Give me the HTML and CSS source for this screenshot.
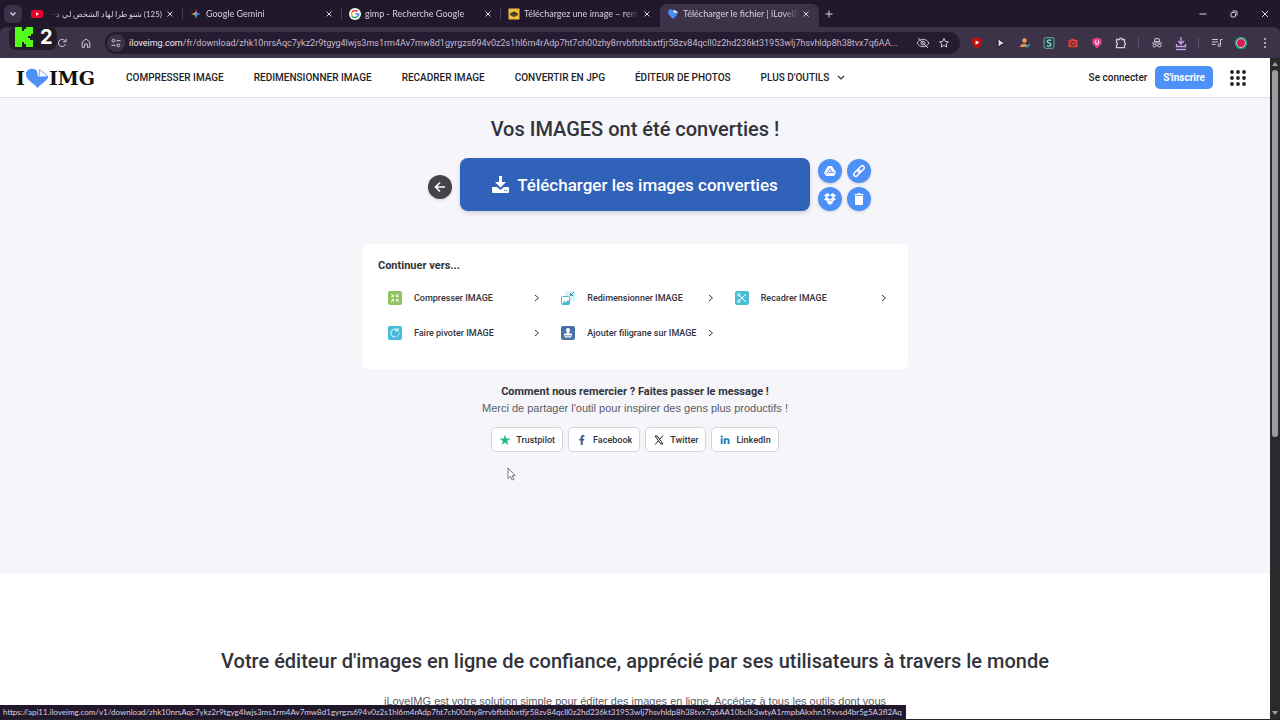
FILE: index.html
```html
<!DOCTYPE html>
<html lang="fr">
<head>
    <meta charset="utf-8">
    <title>Télécharger le fichier | iLoveIMG</title>
    <link rel="stylesheet" href="styles.css">
</head>
<body>
    <header class="browser">
        <div class="tabs">
            <button class="tab-search" aria-label="Rechercher des onglets">
                <svg width="8" height="8" viewBox="0 0 8 8"><path d="M1.5 2.5L4 5l2.500-2.500" fill="none" stroke="#ddd6e6" stroke-width="1.300"/></svg>
            </button>
            <div class="tab">
                <svg width="12" height="12" viewBox="0 0 12 12"><rect y="2" width="12" height="8" rx="2" fill="#e8002d"/><path d="M5 4.200v3.600L8 6z" fill="#fff"/></svg>
                <span class="tab-title arabic" dir="rtl">(125) شنو طرا لهاد الشخص لي د-</span>
                <button class="close" aria-label="Fermer"><svg width="8" height="8" viewBox="0 0 8 8"><path d="M1.500 1.500l5 5m0-5l-5 5"/></svg></button>
            </div>
            <div class="tab">
                <svg width="12" height="12" viewBox="0 0 12 12"><path d="M6 1Q6.500 4 8 6H4Q5.500 4 6 1z" fill="#ee5145"/><path d="M1 6Q4 5.500 6 4v4Q4 6.500 1 6z" fill="#f3c13b"/><path d="M6 11Q5.500 8 4 6h4Q6.500 8 6 11z" fill="#37b27c"/><path d="M11 6Q8 5.500 6 4v4Q8 6.500 11 6z" fill="#4b8df5"/></svg>
                <span class="tab-title">Google Gemini</span>
                <button class="close" aria-label="Fermer"><svg width="8" height="8" viewBox="0 0 8 8"><path d="M1.500 1.500l5 5m0-5l-5 5"/></svg></button>
            </div>
            <div class="tab">
                <svg width="12" height="12" viewBox="0 0 12 12"><circle cx="6" cy="6" r="6" fill="#fff"/><g fill="none" stroke-width="1.600"><path d="M8.600 3.600A3.600 3.600 0 0 0 2.900 4.300" stroke="#ea4335"/><path d="M2.900 4.300a3.600 3.600 0 0 0 0 3.500" stroke="#fbbc05"/><path d="M2.900 7.800a3.600 3.600 0 0 0 5.500.900" stroke="#34a853"/><path d="M8.400 8.700A3.600 3.600 0 0 0 9.600 6H6.200" stroke="#4285f4"/></g></svg>
                <span class="tab-title">gimp - Recherche Google</span>
                <button class="close" aria-label="Fermer"><svg width="8" height="8" viewBox="0 0 8 8"><path d="M1.500 1.500l5 5m0-5l-5 5"/></svg></button>
            </div>
            <div class="tab">
                <svg width="12" height="12" viewBox="0 0 12 12"><rect x=".5" y=".5" width="11" height="11" fill="#f3bd3f"/><path d="M2 5.500l4-2 4 2v1.500L6 9 2 7z" fill="#3a322a"/><path d="M3 6l3 1.500L9 6" fill="none" stroke="#8a6c35" stroke-width=".7"/></svg>
                <span class="tab-title">Téléchargez une image – remov</span>
                <button class="close" aria-label="Fermer"><svg width="8" height="8" viewBox="0 0 8 8"><path d="M1.500 1.500l5 5m0-5l-5 5"/></svg></button>
            </div>
            <div class="tab active">
                <svg width="12" height="12" viewBox="0 0 12 12"><path d="M6 2.300C4.700.400 1 .800 1 3.900 1 6.700 4 9 6 11c2-2 5-4.300 5-7.100L8.500 5.200 6 4z" fill="#4c8cf5"/><path d="M6.500 1.500L11 4 8 5.200 6.300 4z" fill="#e8f0fe"/></svg>
                <span class="tab-title">Télécharger le fichier | iLoveIMG</span>
                <button class="close" aria-label="Fermer"><svg width="8" height="8" viewBox="0 0 8 8"><path d="M1.500 1.500l5 5m0-5l-5 5"/></svg></button>
            </div>
            <button class="new-tab" aria-label="Nouvel onglet"><svg width="8" height="8" viewBox="0 0 8 8"><path d="M4 .5v7M.5 4h7"/></svg></button>
            <div class="window-controls">
                <button aria-label="Réduire"><svg width="8" height="8" viewBox="0 0 8 8"><path d="M.5 4h7"/></svg></button>
                <button aria-label="Restaurer"><svg width="8" height="8" viewBox="0 0 8 8"><rect x="1" y="2.500" width="4.500" height="4.500" rx="1"/><path d="M2.500 1h3.500a1 1 0 0 1 1 1v3.500"/></svg></button>
                <button aria-label="Fermer la fenêtre"><svg width="8" height="8" viewBox="0 0 8 8"><path d="M1 1l6 6m0-6L1 7"/></svg></button>
            </div>
        </div>

        <div class="toolbar">
            <button class="tool" aria-label="Retour"><svg width="12" height="12" viewBox="0 0 12 12"><path d="M10 6H2m4-4L2 6l4 4"/></svg></button>
            <button class="tool" aria-label="Avancer"><svg width="12" height="12" viewBox="0 0 12 12"><path d="M2 6h8M6 2l4 4-4 4"/></svg></button>
            <button class="tool" aria-label="Actualiser"><svg width="12" height="12" viewBox="0 0 12 12"><path d="M9.500 7A3.600 3.600 0 1 1 8.600 3.400L10 4.700M10 2v2.800H7.200"/></svg></button>
            <button class="tool" aria-label="Accueil"><svg width="12" height="12" viewBox="0 0 12 12"><path d="M2.200 5L6 2l3.800 3v5.300H7.400V7H4.600v3.300H2.200z"/></svg></button>
            <div class="address">
                <button class="site-info" aria-label="Informations"><svg width="10" height="10" viewBox="0 0 10 10"><circle cx="2.500" cy="2.700" r="1.400"/><path d="M5.500 2.700H9.500M.5 7.300h4"/><circle cx="7.300" cy="7.300" r="1.400"/></svg></button>
                <span class="url"><b>iloveimg.com</b>/fr/download/zhk10nrsAqc7ykz2r9tgyg4lwjs3ms1rm4Av7mw8d1gyrgzs694v0z2s1hl6m4rAdp7ht7ch00zhy8rrvbfbtbbxtfjr58zv84qcll0z2hd236kt31953wlj7hsvhldp8h38tvx7q6AA...</span>
                <button class="address-icon" aria-label="Cookies tiers"><svg width="14" height="12" viewBox="0 0 14 12"><path d="M1 6c3-5 9-5 12 0-3 5-9 5-12 0z"/><circle cx="7" cy="6" r="2"/><path d="M2 1l10 10"/></svg></button>
                <button class="address-icon" aria-label="Favori"><svg width="12" height="12" viewBox="0 0 12 12"><path d="M6 1.500l1.300 3 3.200.300-2.400 2.100.700 3.200L6 8.400l-2.800 1.700.7-3.200-2.400-2.100 3.200-.3z"/></svg></button>
            </div>
            <button class="tool" aria-label="Bloqueur"><svg width="12" height="12" viewBox="0 0 12 12"><path d="M6 .5l5 1.500c0 4-1 7.500-5 9.500C2 9.500 1 6 1 2z" fill="#c60c12" stroke="none"/><path d="M4.600 3.500v4.200L8.200 5.600z" fill="#fff" stroke="none"/></svg></button>
            <button class="tool" aria-label="Curseur"><svg width="12" height="12" viewBox="0 0 12 12"><path d="M3 1.500l7 5.500-3.500.5L3 10.500z" fill="#d9dcf2" stroke="#171322"/></svg></button>
            <button class="tool" aria-label="Compte"><svg width="12" height="12" viewBox="0 0 12 12"><circle cx="5.500" cy="3.500" r="2.200" fill="#f3a05a" stroke="none"/><path d="M1 10c0-4.500 8-4.500 8 0z" fill="#e8904a" stroke="none"/><path d="M7 8.500L8.500 10 11 7" stroke="#25a795" stroke-width="1.500"/></svg></button>
            <button class="tool" aria-label="Extension S"><svg width="12" height="12" viewBox="0 0 12 12"><rect x="1" y=".7" width="10" height="10.600" rx="1.500" fill="#28424a" stroke="#73a7a6"/><path d="M8 3.600C7 2.600 4.200 2.800 4.200 4.400c0 1.900 3.800 1.200 3.800 3.200 0 1.600-3 1.900-4 .7" stroke="#8ed8c8" stroke-width="1.300"/></svg></button>
            <button class="tool" aria-label="Capture"><svg width="12" height="12" viewBox="0 0 12 12"><path d="M1.500 3h2l1-1.200h3L8.500 3h2v7.200h-9z" fill="#dd3d3d" stroke="none"/><circle cx="6" cy="6.500" r="2" stroke="#4b2631"/></svg></button>
            <button class="tool" aria-label="Protection"><svg width="12" height="12" viewBox="0 0 12 12"><path d="M6 .5l4.500 1.800v4.500L6 11.500 1.500 6.800V2.300z" fill="#e0438b" stroke="none"/><path d="M4.700 3.500v2.700c0 1.700 2.600 1.700 2.600 0V3.500" stroke="#fff"/></svg></button>
            <button class="tool" aria-label="Extensions"><svg width="12" height="12" viewBox="0 0 12 12"><path d="M1.500 2.500h3a1.300 1.300 0 0 1 2.600 0h2.400v3a1.300 1.300 0 0 1 0 2.500v2.700h-8V8a1.400 1.400 0 0 0 0-2.600z" stroke-width="1.300"/></svg></button>
            <span class="divider"></span>
            <button class="tool" aria-label="Navigation privée"><svg width="12" height="12" viewBox="0 0 12 12"><path d="M1 6h10M3.200 4.500L4 1.700h4l.8 2.800z"/><circle cx="3.500" cy="8.600" r="1.500"/><circle cx="8.500" cy="8.600" r="1.500"/><path d="M5 8.300h2"/></svg></button>
            <button class="tool" aria-label="Téléchargements"><svg width="12" height="16" viewBox="0 0 12 16"><g stroke="#c9a5ee" stroke-width="1.300"><path d="M6 2v7M3 6l3 3 3-3M1.500 9v2.500h9V9" /><path d="M1 14.500h10"/></g></svg></button>
            <span class="divider"></span>
            <button class="tool" aria-label="Multimédia"><svg width="12" height="12" viewBox="0 0 12 12"><path d="M1 2.500h6M1 5h6M1 7.500h3.500M11.500 2.500h-2V8"/><circle cx="8.200" cy="8.300" r="1.300"/></svg></button>
            <button class="tool" aria-label="Profil"><svg width="14" height="14" viewBox="0 0 14 14"><circle cx="7" cy="7" r="6.300" fill="#109a73" stroke="none"/><circle cx="7" cy="7" r="4.500" fill="#d81b55" stroke="#e8d7d8" stroke-width=".8"/></svg></button>
            <button class="tool" aria-label="Menu"><svg width="12" height="12" viewBox="0 0 12 12"><g fill="#cfc6d8" stroke="none"><circle cx="6" cy="2" r="1"/><circle cx="6" cy="6" r="1"/><circle cx="6" cy="10" r="1"/></g></svg></button>
        </div>
    </header>

    <div class="overlay-badge">
        <svg width="18" height="20" viewBox="0 0 18 20"><path d="M0 0h7v4h2V2h2V0h7v7h-2v2h-3v2h2v2h3v7h-7v-3H9v-2H7v5H0z" fill="#53fc18"/></svg>
        <span>2</span>
    </div>

    <div class="viewport">
        <div class="page">
            <nav class="navbar">
                <a class="logo" href="#" aria-label="iLoveIMG">
                    <span>I</span>
                    <svg width="24" height="20" viewBox="0 0 24 20"><path d="M12 3C9-.7 1 .2 1 6.500 1 12 8 14.500 12.500 20 17 15 21.500 13 23.500 9H13z" fill="#4d90f7"/><path d="M14.500 1.500l8.500 7-9 .5z" fill="#fff" stroke="#4d90f7" stroke-width=".8"/></svg>
                    <span>IMG</span>
                </a>
                <a href="#">COMPRESSER IMAGE</a>
                <a href="#">REDIMENSIONNER IMAGE</a>
                <a href="#">RECADRER IMAGE</a>
                <a href="#">CONVERTIR EN JPG</a>
                <a href="#">ÉDITEUR DE PHOTOS</a>
                <a href="#">PLUS D'OUTILS <svg class="caret" width="8" height="6" viewBox="0 0 8 6"><path d="M1 1l3 3 3-3" fill="none" stroke="#333" stroke-width="1.200"/></svg></a>
                <div class="account">
                    <a href="#">Se connecter</a>
                    <a class="signup" href="#">S'inscrire</a>
                    <button class="apps" aria-label="Applications">
                        <svg width="16" height="16" viewBox="0 0 16 16" fill="#242428"><circle cx="2" cy="2" r="1.900"/><circle cx="8" cy="2" r="1.900"/><circle cx="14" cy="2" r="1.900"/><circle cx="2" cy="8" r="1.900"/><circle cx="8" cy="8" r="1.900"/><circle cx="14" cy="8" r="1.900"/><circle cx="2" cy="14" r="1.900"/><circle cx="8" cy="14" r="1.900"/><circle cx="14" cy="14" r="1.900"/></svg>
                    </button>
                </div>
            </nav>

            <main class="result">
                <h1>Vos IMAGES ont été converties !</h1>
                <div class="download">
                    <button class="round back" aria-label="Retour"><svg width="12" height="12" viewBox="0 0 12 12"><path d="M11 6H1.500M6 1.500L1.500 6 6 10.500" fill="none" stroke="#fff" stroke-width="1.600"/></svg></button>
                    <button class="download-button">
                        <svg width="17" height="17" viewBox="0 0 17 17" fill="#fff"><path d="M7 0h3v6h4L8.500 11.500 3 6h4z"/><path d="M1 11h4l3.500 3 3.500-3h4a1 1 0 0 1 1 1v4a1 1 0 0 1-1 1H1a1 1 0 0 1-1-1v-4a1 1 0 0 1 1-1z"/><path d="M12 14.500h1m1 0h1" stroke="#3162b9"/></svg>
                        Télécharger les images converties
                    </button>
                    <div class="download-options">
                        <button class="round" aria-label="Google Drive"><svg width="12" height="12" viewBox="0 0 12 12"><path d="M4 1h4l4 6.500-2 3.500H2L0 7.500z" fill="#fff"/><path d="M6 3.500l-3.500 6M4.500 7.500h6M6 4l2 3.500" fill="none" stroke="#4d90f7" stroke-width=".9"/></svg></button>
                        <button class="round" aria-label="Copier le lien"><svg width="14" height="14" viewBox="0 0 14 14" fill="none" stroke="#fff" stroke-width="1.500"><rect x="-3.800" y="-1.900" width="7.600" height="3.800" rx="1.900" transform="translate(9 5) rotate(-45)"/><rect x="-3.800" y="-1.900" width="7.600" height="3.800" rx="1.900" transform="translate(5 9) rotate(-45)"/></svg></button>
                        <button class="round" aria-label="Dropbox"><svg width="12" height="12" viewBox="0 0 12 12" fill="#fff"><path d="M3.300 0L6 1.900 8.700 0 12 2.400 9.800 4.300 12 6.200 8.700 8.400 6 6.400 3.300 8.400 0 6.200l2.200-1.900L0 2.400zM6 2.200L3 4.300l3 2 3-2zM3 9l3-1.800L9 9v.7L6 12 3 9.700z" fill-rule="evenodd"/></svg></button>
                        <button class="round" aria-label="Supprimer"><svg width="12" height="14" viewBox="0 0 12 14" fill="#fff"><path d="M1.500 2h3l.5-1h2l.5 1h3v1.300h-9zM2 4h8v8a1 1 0 0 1-1 1H3a1 1 0 0 1-1-1z"/></svg></button>
                    </div>
                </div>

                <section class="continue">
                    <h2>Continuer vers...</h2>
                    <div class="tools">
                        <a href="#">
                            <svg width="14" height="14" viewBox="0 0 14 14"><rect width="14" height="14" rx="2" fill="#8fc45f"/><path d="M3 3l2.500 2.500M3.300 5.500h2.200V3.300M11 3L8.500 5.500M10.700 5.500H8.500V3.300M3 11l2.500-2.500M3.300 8.500h2.200v2.200M11 11L8.500 8.500M10.700 8.500H8.500v2.200" fill="none" stroke="#fff" stroke-width=".9"/></svg>
                            <span>Compresser IMAGE</span>
                            <svg class="arrow" width="6" height="8" viewBox="0 0 6 8"><path d="M1 1l3.500 3L1 7"/></svg>
                        </a>
                        <a href="#">
                            <svg width="14" height="14" viewBox="0 0 14 14"><rect x="4" y="0" width="10" height="10" rx="1" fill="#daf4f7"/><rect x=".5" y="5.500" width="8" height="8" rx="1" fill="#fff" stroke="#45b9cf"/><path d="M1 13l2.500-3L5 11.500 7 9l1.500 2v2.500H1z" fill="#45b9cf"/><path d="M13 1L9.500 4.500M9.500 2v2.500H12" fill="none" stroke="#3199b0"/></svg>
                            <span>Redimensionner IMAGE</span>
                            <svg class="arrow" width="6" height="8" viewBox="0 0 6 8"><path d="M1 1l3.500 3L1 7"/></svg>
                        </a>
                        <a href="#">
                            <svg width="14" height="14" viewBox="0 0 14 14"><rect width="14" height="14" rx="2" fill="#4abcd6"/><g fill="none" stroke="#fff"><path d="M4.500 4.500L11 11M4.500 9.500L11 3"/><circle cx="3.800" cy="3.800" r="1.200"/><circle cx="3.800" cy="10.200" r="1.200"/></g></svg>
                            <span>Recadrer IMAGE</span>
                            <svg class="arrow" width="6" height="8" viewBox="0 0 6 8"><path d="M1 1l3.500 3L1 7"/></svg>
                        </a>
                        <a href="#">
                            <svg width="14" height="14" viewBox="0 0 14 14"><rect width="14" height="14" rx="2" fill="#45bcdc"/><path d="M9.500 4A4 4 0 1 0 7 11M10 2v2.800H7.200" fill="none" stroke="#fff"/><path d="M8.500 10.800a4 4 0 0 0 2.500-4.500" fill="none" stroke="#fff" stroke-dasharray="1.200 1"/></svg>
                            <span>Faire pivoter IMAGE</span>
                            <svg class="arrow" width="6" height="8" viewBox="0 0 6 8"><path d="M1 1l3.500 3L1 7"/></svg>
                        </a>
                        <a href="#">
                            <svg width="14" height="14" viewBox="0 0 14 14"><rect width="14" height="14" rx="2" fill="#4a71a5"/><path d="M7 2a2 2 0 0 1 1.700 3L8 7.500h3v2H3v-2h3L5.300 5A2 2 0 0 1 7 2zM3.500 10.300h7v1.200h-7z" fill="#fff"/></svg>
                            <span>Ajouter filigrane sur IMAGE</span>
                            <svg class="arrow" width="6" height="8" viewBox="0 0 6 8"><path d="M1 1l3.500 3L1 7"/></svg>
                        </a>
                    </div>
                </section>

                <section class="thanks">
                    <h2>Comment nous remercier ? Faites passer le message !</h2>
                    <p>Merci de partager l'outil pour inspirer des gens plus productifs !</p>
                    <div class="share">
                        <a href="#"><svg width="12" height="12" viewBox="0 0 12 12"><path d="M6 .8l1.300 3.800h4.200L8.200 7l1.200 4L6 8.600 2.600 11l1.200-4L.5 4.600h4.200z" fill="#22bd80"/></svg>Trustpilot</a>
                        <a href="#"><svg width="12" height="12" viewBox="0 0 12 12"><path d="M4.800 11V6.500H3.300V4.700h1.500V3.400C4.800 1.700 5.800 1 7.200 1h1.200v1.700h-.9c-.6 0-.8.300-.8.900v1.100h1.700l-.3 1.800H6.700V11z" fill="#3b5998"/></svg>Facebook</a>
                        <a href="#"><svg width="12" height="12" viewBox="0 0 12 12"><path d="M2 2h2.200L10 10H7.800z" fill="none" stroke="#222"/><path d="M10 1.500L6.700 5.300M5.300 6.800L2 10.500" stroke="#222"/></svg>Twitter</a>
                        <a href="#"><svg width="12" height="12" viewBox="0 0 12 12"><g fill="#1479b8"><circle cx="2.700" cy="2.500" r="1.100"/><path d="M1.800 4.300h1.800V10H1.800zM4.800 4.300h1.700v.8c1-1.500 4-1.300 4 1.500V10H8.700V7c0-1.700-2.100-1.700-2.100 0v3H4.800z"/></g></svg>LinkedIn</a>
                    </div>
                </section>
            </main>

            <section class="about">
                <h2>Votre éditeur d'images en ligne de confiance, apprécié par ses utilisateurs à travers le monde</h2>
                <p>iLoveIMG est votre solution simple pour éditer des images en ligne. Accédez à tous les outils dont vous</p>
            </section>
        </div>
        <div class="scrollbar">
            <svg width="8" height="6" viewBox="0 0 8 6"><path d="M4 1l3 4H1z"/></svg>
            <div class="thumb"></div>
            <svg width="8" height="6" viewBox="0 0 8 6"><path d="M4 5L1 1h6z"/></svg>
        </div>
    </div>

    <div class="status">https://api11.iloveimg.com/v1/download/zhk10nrsAqc7ykz2r9tgyg4lwjs3ms1rm4Av7mw8d1gyrgzs694v0z2s1hl6m4rAdp7ht7ch00zhy8rrvbfbtbbxtfjr58zv84qcll0z2hd236kt31953wlj7hsvhldp8h38tvx7q6AA10bclk3wtyA1rmpbAkxhn19xvsd4br5g5A3fl2Aq</div>
    <svg class="cursor" width="9" height="14" viewBox="0 0 9 14"><path d="M1 1v10.500l2.500-2.200 1.700 3.700 1.600-.700-1.600-3.600H8.300z" fill="#fff" stroke="#555" stroke-width=".8"/></svg>
</body>
</html>
```
FILE: styles.css
```css
* {
    box-sizing: border-box;
}

body {
    margin: 0;
    height: 100vh;
    display: flex;
    flex-direction: column;
    overflow: hidden;
    position: relative;
    background: #262429;
    color: #33333b;
    font-family: Roboto, "Liberation Sans", sans-serif;
}

button {
    border: 0;
    padding: 0;
    background: none;
    font-family: inherit;
    display: flex;
    align-items: center;
    justify-content: center;
    cursor: pointer;
}

a {
    color: inherit;
    text-decoration: none;
}

h1, h2, p {
    margin: 0;
}

svg {
    flex: none;
}

/* Browser */
.browser {
    flex: none;
    background: #21182c;
    color: #d8d0e0;
}

.tabs {
    height: 27px;
    display: flex;
    align-items: center;
    padding-left: 4px;
}

.tabs button svg {
    fill: none;
    stroke: #d8d0e0;
}

.tab-search {
    width: 18px;
    height: 18px;
    margin-right: 2px;
    border-radius: 6px;
    background: #3c3148;
}

.tab {
    width: 159px;
    height: 23px;
    display: flex;
    align-items: center;
    gap: 4px;
    padding: 0 9px 0 7px;
    background: linear-gradient(#4a3f58, #4a3f58) right center / 1px 11px no-repeat;
}

.tab:nth-last-child(4) {
    background: none;
}

.tab.active {
    align-self: flex-end;
    padding-bottom: 4px;
    background: #3d3349;
    border-radius: 7px 7px 0 0;
}

.tab-title {
    flex: 1;
    overflow: hidden;
    white-space: nowrap;
    font-family: Lato, sans-serif;
    font-size: 9px;
    -webkit-mask-image: linear-gradient(90deg, #000 88%, transparent);
    mask-image: linear-gradient(90deg, #000 88%, transparent);
}

.tab-title.arabic {
    font-size: 8px;
    -webkit-mask-image: linear-gradient(270deg, #000 88%, transparent);
    mask-image: linear-gradient(270deg, #000 88%, transparent);
}

.new-tab {
    width: 20px;
    height: 20px;
}

.window-controls {
    margin-left: auto;
    display: flex;
}

.window-controls button {
    width: 31px;
    height: 27px;
}

.toolbar {
    height: 31px;
    display: flex;
    align-items: center;
    padding: 0 3px 0 2px;
    background: #3d3349;
    border-radius: 6px 6px 0 0;
}

.toolbar svg {
    fill: none;
    stroke: #cfc6d8;
}

.tool {
    width: 24px;
    height: 24px;
}

.divider {
    width: 1px;
    height: 10px;
    margin: 0 6px 0 5px;
    background: #5d506b;
}

.address {
    flex: 1;
    min-width: 0;
    height: 22px;
    display: flex;
    align-items: center;
    margin: 0 5px 0 7px;
    padding: 0 6px 0 2px;
    border-radius: 11px;
    background: #261c31;
}

.site-info {
    width: 18px;
    height: 18px;
    margin-right: 4px;
    border-radius: 50%;
    background: #3d3349;
}

.url {
    flex: 1;
    overflow: hidden;
    white-space: nowrap;
    font-size: 9px;
    color: #c3bacd;
}

.url b {
    font-weight: 400;
    color: #eee8f4;
}

.address-icon {
    width: 21px;
    height: 20px;
}

.overlay-badge {
    position: absolute;
    top: 26px;
    left: 9px;
    display: flex;
    align-items: center;
    gap: 7px;
    height: 24px;
    padding: 0 4px 2px 6px;
    border-radius: 8px;
    background: #221c28;
    color: #fff;
    font: 700 20px/22px Inter, sans-serif;
}

/* Page */
.viewport {
    flex: 1;
    min-height: 0;
    display: flex;
    margin-bottom: 1px;
}

.page {
    flex: 1;
    min-width: 0;
    overflow: hidden;
    background: #fff;
}

.navbar {
    height: 40px;
    display: flex;
    align-items: center;
    gap: 30px;
    padding: 0 24px 0 16px;
    border-bottom: 1px solid #dedee5;
    color: #222226;
    font-size: 10px;
    font-weight: 500;
    white-space: nowrap;
}

.logo {
    display: flex;
    align-items: center;
    margin-right: 1px;
    color: #111;
    font-family: "DejaVu Serif", serif;
    font-size: 19px;
    font-weight: 700;
}

.caret {
    margin-left: 5px;
}

.account {
    margin-left: auto;
    display: flex;
    align-items: center;
    gap: 8px;
}

.signup {
    padding: 0 8px;
    border-radius: 5px;
    background: #4d90f7;
    color: #fff;
    font-weight: 700;
    line-height: 23px;
}

.apps {
    margin-left: 9px;
}

.result {
    display: flex;
    flex-direction: column;
    align-items: center;
    min-height: 476px;
    padding-top: 18px;
    background: #f5f5fa;
}

.result h1,
.about h2 {
    font-size: 20px;
    font-weight: 500;
    line-height: 26px;
}

.download {
    display: flex;
    align-items: center;
    gap: 8px;
    margin: 16px 0 0 29px;
}

.download-button {
    height: 53px;
    gap: 8px;
    padding: 0 32px;
    border-radius: 8px;
    background: #3162b9;
    color: #fff;
    font-size: 17px;
    font-weight: 500;
    box-shadow: 0 2px 4px rgba(0, 0, 0, 0.15);
}

.download-options {
    display: grid;
    grid-template-columns: 24px 24px;
    gap: 4px 5px;
}

.round {
    width: 24px;
    height: 24px;
    border-radius: 50%;
    background: #4d90f7;
    box-shadow: 0 1px 3px rgba(0, 0, 0, 0.15);
}

.round.back {
    margin-top: 5px;
    background: #444347;
}

.continue {
    width: 43%;
    min-height: 125px;
    margin-top: 33px;
    padding: 14px 10px 0 16px;
    border-radius: 6px;
    background: #fff;
}

.continue h2,
.thanks h2 {
    font-size: 11px;
    font-weight: 700;
    line-height: 16px;
}

.tools {
    display: grid;
    grid-template-columns: repeat(3, minmax(0, 1fr));
    margin-top: 6px;
}

.tools a {
    height: 35px;
    display: flex;
    align-items: center;
    gap: 12px;
    padding: 0 11px 0 10px;
    font-size: 9px;
    font-weight: 500;
    white-space: nowrap;
}

.arrow {
    margin-left: auto;
    fill: none;
    stroke: #333;
}

.tools .arrow {
    margin-left: auto;
}

.thanks {
    margin-top: 15px;
    text-align: center;
}

.thanks p,
.about p {
    color: #5b5b64;
    font-family: "Liberation Sans", sans-serif;
    font-size: 11px;
    line-height: 16px;
}

.share {
    display: flex;
    justify-content: center;
    gap: 5px;
    margin-top: 11px;
}

.share a {
    height: 25px;
    display: flex;
    align-items: center;
    gap: 5px;
    padding: 0 7px;
    border: 1px solid #d4d4dc;
    border-radius: 5px;
    background: #fff;
    font-size: 9px;
    font-weight: 500;
}

.about {
    display: flex;
    flex-direction: column;
    align-items: center;
    padding-top: 74px;
    text-align: center;
}

.about p {
    margin-top: 19px;
}

.scrollbar {
    width: 10px;
    display: flex;
    flex-direction: column;
    align-items: center;
    padding: 3px 0;
    background: #2a2a2c;
}

.scrollbar svg {
    fill: #a0a0a3;
}

.thumb {
    width: 6px;
    height: 56%;
    margin: 3px 0 auto;
    border-radius: 3px;
    background: #9c9c9f;
}

/* Over the page */
.status {
    position: absolute;
    left: 0;
    bottom: 1px;
    padding: 0 4px 0 3px;
    background: #21182c;
    color: #d8d0e0;
    font-family: Lato, sans-serif;
    font-size: 8px;
    line-height: 14px;
    white-space: nowrap;
}

.cursor {
    position: absolute;
    left: 507px;
    top: 467px;
}
```
